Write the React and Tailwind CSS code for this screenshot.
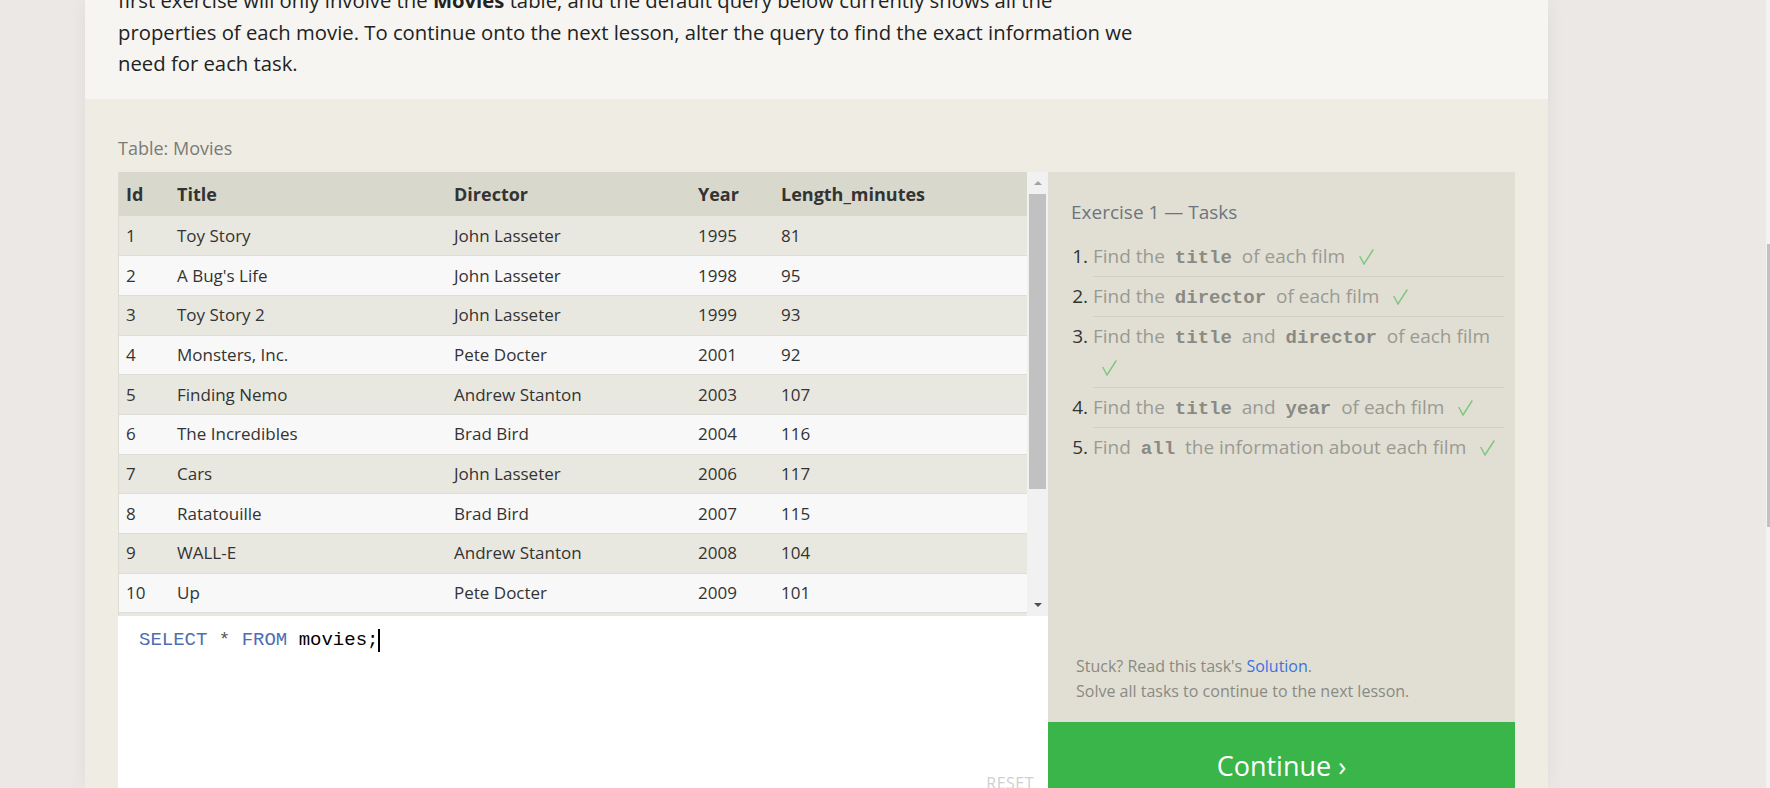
import React from 'react';

const movies = [
  [1, 'Toy Story', 'John Lasseter', 1995, 81],
  [2, "A Bug's Life", 'John Lasseter', 1998, 95],
  [3, 'Toy Story 2', 'John Lasseter', 1999, 93],
  [4, 'Monsters, Inc.', 'Pete Docter', 2001, 92],
  [5, 'Finding Nemo', 'Andrew Stanton', 2003, 107],
  [6, 'The Incredibles', 'Brad Bird', 2004, 116],
  [7, 'Cars', 'John Lasseter', 2006, 117],
  [8, 'Ratatouille', 'Brad Bird', 2007, 115],
  [9, 'WALL-E', 'Andrew Stanton', 2008, 104],
  [10, 'Up', 'Pete Docter', 2009, 101],
  [11, 'Toy Story 3', 'Lee Unkrich', 2010, 103],
  [12, 'Cars 2', 'John Lasseter', 2011, 120],
  [13, 'Brave', 'Brenda Chapman', 2012, 102],
  [14, 'Monsters University', 'Dan Scanlon', 2013, 110],
];

function Check() {
  return (
    <svg width="15" height="16" viewBox="0 0 15 16" className="inline-block ml-[9px] align-[-2px]">
      <polyline points="0.7,7 5,15 14.3,0.5" fill="none" stroke="#7cc67e" strokeWidth="1.4" />
    </svg>
  );
}

function Code({ children }) {
  return (
    <code className="font-['Liberation_Mono',monospace] font-bold text-[19px] leading-[20px] text-[#8a8a85] px-[5px]">{children}</code>
  );
}

function Task({ last, children }) {
  return (
    <li className={`py-[4px] leading-[31px] ${last ? '' : 'border-b border-[#d3d1c5]'}`}>
      <span className="text-[#9a9a94]">{children}</span>
    </li>
  );
}

export default function App() {
  return (
    <div className="w-[1770px] h-[788px] overflow-hidden bg-[#ece8e5] flex font-['Open_Sans',sans-serif]">
      {/* lesson card */}
      <div className="ml-[85px] w-[1463px] flex flex-col shadow-[0_0_18px_rgba(0,0,0,0.06)]">
        <div className="h-[99px] shrink-0 overflow-hidden bg-[#f6f5f1] px-[33px]">
          <p className="-mt-[15px] text-[20.3px] leading-[31.5px] text-[#222] whitespace-nowrap">
            first exercise will only involve the <b>Movies</b> table, and the default query below currently shows all the
            <br />
            properties of each movie. To continue onto the next lesson, alter the query to find the exact information we
            <br />
            need for each task.
          </p>
        </div>

        <div className="flex-1 bg-[#efece4] px-[33px] pt-[37px]">
          <div className="text-[18px] leading-[24px] text-[#7b7b76] mb-[12px]">Table: Movies</div>

          <div className="flex">
            {/* table + editor */}
            <div className="w-[930px] flex flex-col">
              <div className="flex h-[444px] bg-[#f1f1f1]">
                <div className="w-[909px] overflow-hidden border-l border-[#dddcd3]">
                  <table className="w-[908px] table-fixed border-collapse text-left text-[#333]">
                    <colgroup>
                      <col className="w-[50px]" />
                      <col className="w-[277px]" />
                      <col className="w-[244px]" />
                      <col className="w-[83px]" />
                      <col className="w-[254px]" />
                    </colgroup>
                    <thead>
                      <tr className="h-[44px] bg-[#d9d8cc] text-[18px] font-bold">
                        <th className="pl-[7px]">Id</th>
                        <th className="pl-[8px]">Title</th>
                        <th className="pl-[8px]">Director</th>
                        <th className="pl-[8px]">Year</th>
                        <th className="pl-[8px]">Length_minutes</th>
                      </tr>
                    </thead>
                    <tbody className="text-[17px]">
                      {movies.map((m, i) => (
                        <tr
                          key={m[0]}
                          className={`h-[39.7px] border-b border-[#dddcd6] ${i % 2 === 0 ? 'bg-[#e9e8e0]' : 'bg-[#f8f8f8]'}`}
                        >
                          <td className="pl-[7px] leading-[22px]">{m[0]}</td>
                          <td className="pl-[8px] leading-[22px]">{m[1]}</td>
                          <td className="pl-[8px] leading-[22px]">{m[2]}</td>
                          <td className="pl-[8px] leading-[22px]">{m[3]}</td>
                          <td className="pl-[8px] leading-[22px]">{m[4]}</td>
                        </tr>
                      ))}
                    </tbody>
                  </table>
                </div>
                {/* scrollbar */}
                <div className="w-[21px] flex flex-col bg-[#f1f1f1]">
                  <div className="h-[22px] flex items-center justify-center">
                    <div className="w-0 h-0 border-l-[4px] border-r-[4px] border-b-[4px] border-l-transparent border-r-transparent border-b-[#a3a3a3]" />
                  </div>
                  <div className="h-[295px] ml-[2px] w-[17px] bg-[#c1c1c1]" />
                  <div className="flex-1" />
                  <div className="h-[22px] flex items-center justify-center">
                    <div className="w-0 h-0 border-l-[4px] border-r-[4px] border-t-[4px] border-l-transparent border-r-transparent border-t-[#505050]" />
                  </div>
                </div>
              </div>

              <div className="h-[190px] bg-white flex flex-col pl-[21px] pr-[14px] pt-[12px] pb-[13px]">
                <div className="font-['Liberation_Mono',monospace] text-[19px] leading-[24px] flex items-center">
                  <span className="text-[#4f6db3]">SELECT</span>
                  <span className="text-[#555] whitespace-pre"> * </span>
                  <span className="text-[#4f6db3]">FROM</span>
                  <span className="text-black whitespace-pre"> movies;</span>
                  <span className="inline-block w-[2px] h-[23px] bg-black" />
                </div>
                <div className="mt-auto self-end text-[16px] leading-[20px] tracking-[0.5px] text-[#cfcfcf]">RESET</div>
              </div>
            </div>

            {/* tasks panel */}
            <div className="w-[467px] flex flex-col">
              <div className="h-[550px] bg-[#e1dfd3] pl-[23px] pr-[11px] pt-[26px] pb-[18px] flex flex-col">
                <h2 className="text-[19px] leading-[28px] text-[#6d7480] font-normal">Exercise 1 — Tasks</h2>
                <ol className="mt-[11px] pl-[22px] list-decimal marker:text-[#333] text-[19px]">
                  <Task>
                    Find the <Code>title</Code> of each film <Check />
                  </Task>
                  <Task>
                    Find the <Code>director</Code> of each film <Check />
                  </Task>
                  <Task>
                    Find the <Code>title</Code> and <Code>director</Code> of each film
                    <br />
                    <Check />
                  </Task>
                  <Task>
                    Find the <Code>title</Code> and <Code>year</Code> of each film <Check />
                  </Task>
                  <Task last>
                    Find <Code>all</Code> the information about each film <Check />
                  </Task>
                </ol>
                <div className="mt-auto text-[16px] leading-[25px] text-[#8a8a84] pl-[5px]">
                  Stuck? Read this task's <span className="text-[#3b72e0]">Solution</span>.
                  <br />
                  Solve all tasks to continue to the next lesson.
                </div>
              </div>
              <div className="h-[88px] bg-[#39b54a] flex items-center justify-center text-white text-[27px]">
                Continue ›
              </div>
            </div>
          </div>
        </div>
      </div>

      {/* page scrollbar */}
      <div className="flex-1 flex justify-end">
        <div className="w-[4px] bg-[#f3f3f3]">
          <div className="mt-[244px] ml-[1px] w-[3px] h-[283px] bg-[#c1c1c1]" />
        </div>
      </div>
    </div>
  );
}
